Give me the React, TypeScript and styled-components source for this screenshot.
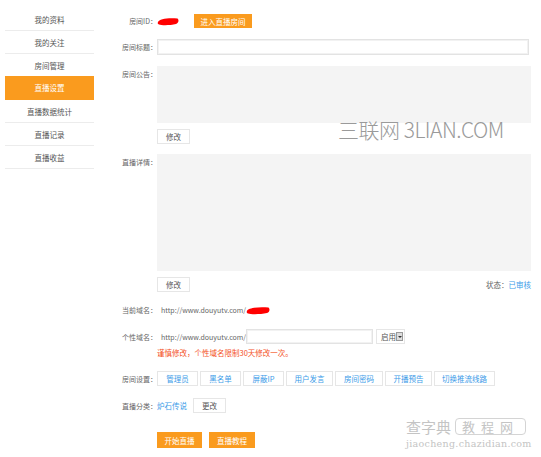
import React from "react";
import styled, { createGlobalStyle } from "styled-components";

const GlobalStyle = createGlobalStyle`
  html, body {
    margin: 0;
    padding: 0;
    background: #fff;
  }
  body {
    font-family: "Noto Sans CJK SC", "Noto Sans", sans-serif;
    font-size: 7.5px;
    color: #555;
  }
`;

const ORANGE = "#fa9b1e";

const Page = styled.div`
  position: relative;
  width: 541px;
  height: 457px;
  display: flex;
  align-items: flex-start;
  overflow: hidden;
`;

const Sidebar = styled.ul`
  list-style: none;
  margin: 8px 0 0 5px;
  padding: 0;
  width: 89px;
  flex-shrink: 0;
`;

const NavItem = styled.li<{ $active?: boolean }>`
  display: flex;
  align-items: center;
  justify-content: center;
  box-sizing: border-box;
  border-bottom: 1px solid ${({ $active }) => ($active ? ORANGE : "#ececec")};
  background: ${({ $active }) => ($active ? ORANGE : "transparent")};
  color: ${({ $active }) => ($active ? "#fff" : "#555")};
  margin-top: ${({ $active }) => ($active ? "-1px" : "0")};
  height: ${({ $active }) => ($active ? "24px" : "23px")};
`;

const Main = styled.div`
  margin-left: 11px;
  width: 426px;
  display: flex;
  flex-direction: column;
`;

const Row = styled.div<{ $mt: number; $top?: boolean }>`
  display: flex;
  align-items: ${({ $top }) => ($top ? "flex-start" : "center")};
  margin-top: ${({ $mt }) => $mt}px;
`;

const Label = styled.span<{ $pt?: number }>`
  width: 52px;
  flex-shrink: 0;
  text-align: right;
  color: #666;
  font-size: 7px;
  line-height: 14px;
  padding-top: ${({ $pt }) => $pt ?? 0}px;
  white-space: nowrap;
`;

const Indent = styled.div`
  margin-left: 52px;
  display: flex;
  align-items: center;
  justify-content: space-between;
`;

const OrangeButton = styled.button<{ $w: number; $h: number }>`
  width: ${({ $w }) => $w}px;
  height: ${({ $h }) => $h}px;
  padding: 0;
  border: none;
  background: ${ORANGE};
  color: #fff;
  font-family: inherit;
  font-size: 7.5px;
  cursor: pointer;
`;

const PlainButton = styled.button<{ $w: number; $blue?: boolean }>`
  width: ${({ $w }) => $w}px;
  height: 15px;
  padding: 0;
  border: 1px solid #e6e6e6;
  background: #fff;
  color: ${({ $blue }) => ($blue ? "#3b9be8" : "#555")};
  font-family: inherit;
  font-size: 7.5px;
  box-sizing: border-box;
`;

const TextInput = styled.div<{ $w: number; $h: number }>`
  width: ${({ $w }) => $w}px;
  height: ${({ $h }) => $h}px;
  box-sizing: border-box;
  border: 1px solid #e3e3e3;
  box-shadow: inset 0 0 0 1px #f2f2f2;
  background: #fff;
`;

const TextArea = styled.div<{ $h: number }>`
  width: 374px;
  height: ${({ $h }) => $h}px;
  background: #f4f4f4;
`;

const Url = styled.span`
  color: #666;
  font-size: 7px;
  margin-left: 4px;
  white-space: nowrap;
`;

const Status = styled.span`
  color: #666;
`;

const Blue = styled.span`
  color: #3b9be8;
`;

const Warning = styled.div`
  margin: 5px 0 0 52px;
  color: #f4511e;
  line-height: 8px;
`;

const Select = styled.div`
  margin-left: 3px;
  width: 29px;
  height: 15px;
  box-sizing: border-box;
  border: 1px solid #e6e6e6;
  display: flex;
  align-items: center;
  justify-content: space-between;
  padding: 0 1px 0 4px;
  color: #555;
`;

const Arrow = styled.span`
  width: 7px;
  height: 9px;
  background: #ddd;
  border: 1px solid #999;
  box-sizing: border-box;
  display: flex;
  align-items: center;
  justify-content: center;
  &::after {
    content: "";
    border-left: 2px solid transparent;
    border-right: 2px solid transparent;
    border-top: 2px solid #333;
  }
`;

const ButtonGroup = styled.div`
  display: flex;
  gap: 2px;
`;

const Scribble = styled.svg`
  display: block;
  flex-shrink: 0;
`;

const Watermark = styled.div`
  position: absolute;
  left: 338px;
  top: 114px;
  font-family: "Noto Sans CJK SC", "Noto Sans", sans-serif;
  font-weight: 300;
  font-size: 21px;
  color: #9a9a9a;
  letter-spacing: -0.5px;
  white-space: nowrap;
`;

const Stamp = styled.div`
  position: absolute;
  left: 406px;
  top: 417px;
  display: flex;
  flex-direction: column;
  align-items: flex-start;
  gap: 2px;
  color: #c4c4c4;
  font-family: "Noto Sans CJK SC", sans-serif;
`;

const StampTop = styled.div`
  display: flex;
  align-items: center;
  gap: 4px;
  height: 19px;
  font-size: 15px;
  line-height: 17px;
`;

const StampBox = styled.span`
  border: 1px solid #d4d4d4;
  border-radius: 4px;
  padding: 0 6px;
  letter-spacing: 6px;
  font-size: 13px;
  line-height: 15px;
`;

const StampUrl = styled.div`
  font-family: "DejaVu Serif", serif;
  font-size: 9.5px;
  line-height: 11px;
  letter-spacing: 0.3px;
`;

const RedMark = ({ w }: { w: number }) => (
  <Scribble width={w} height={9} viewBox={`0 0 ${w} 9`}>
    <path
      d={`M1 5 C 2 2, ${w * 0.5} 0.5, ${w - 1.5} 1.5 C ${w} 2.5, ${w} 6, ${w - 3} 7 C ${w * 0.6} 8.5, ${w * 0.2} 8.5, 2 7.5 C 0.5 7, 0.5 6, 1 5 Z`}
      fill="#f00"
    />
  </Scribble>
);

const navItems = [
  "我的资料",
  "我的关注",
  "房间管理",
  "直播设置",
  "直播数据统计",
  "直播记录",
  "直播收益",
];

const roomButtons = [
  { label: "管理员", w: 41 },
  { label: "黑名单", w: 41 },
  { label: "屏蔽IP", w: 41 },
  { label: "用户发言", w: 47 },
  { label: "房间密码", w: 48 },
  { label: "开播预告", w: 47 },
  { label: "切换推流线路", w: 61 },
];

export default function App() {
  return (
    <Page>
      <GlobalStyle />
      <Sidebar>
        {navItems.map((item) => (
          <NavItem key={item} $active={item === "直播设置"}>
            {item}
          </NavItem>
        ))}
      </Sidebar>
      <Main>
        <Row $mt={14}>
          <Label>房间ID：</Label>
          <RedMark w={22} />
          <OrangeButton $w={58} $h={14} style={{ marginLeft: 15 }}>
            进入直播房间
          </OrangeButton>
        </Row>
        <Row $mt={11}>
          <Label>房间标题：</Label>
          <TextInput $w={372} $h={16} />
        </Row>
        <Row $mt={11} $top>
          <Label $pt={1}>房间公告：</Label>
          <TextArea $h={57} />
        </Row>
        <Indent style={{ marginTop: 6 }}>
          <PlainButton $w={33}>修改</PlainButton>
        </Indent>
        <Row $mt={10} $top>
          <Label $pt={1}>直播详情：</Label>
          <TextArea $h={117} />
        </Row>
        <Indent style={{ marginTop: 6 }}>
          <PlainButton $w={33}>修改</PlainButton>
          <Status>
            状态：<Blue>已审核</Blue>
          </Status>
        </Indent>
        <Row $mt={11}>
          <Label>当前域名：</Label>
          <Url>http://www.douyutv.com/</Url>
          <RedMark w={24} />
        </Row>
        <Row $mt={12}>
          <Label>个性域名：</Label>
          <Url>http://www.douyutv.com/</Url>
          <TextInput $w={127} $h={15} />
          <Select>
            启用
            <Arrow />
          </Select>
        </Row>
        <Warning>谨慎修改，个性域名限制30天修改一次。</Warning>
        <Row $mt={14}>
          <Label>房间设置：</Label>
          <ButtonGroup>
            {roomButtons.map((b) => (
              <PlainButton key={b.label} $w={b.w} $blue>
                {b.label}
              </PlainButton>
            ))}
          </ButtonGroup>
        </Row>
        <Row $mt={12}>
          <Label>直播分类：</Label>
          <Blue>炉石传说</Blue>
          <PlainButton $w={33} style={{ marginLeft: 6 }}>
            更改
          </PlainButton>
        </Row>
        <Indent style={{ marginTop: 19, justifyContent: "flex-start", gap: 7 }}>
          <OrangeButton $w={45} $h={16}>开始直播</OrangeButton>
          <OrangeButton $w={46} $h={16}>直播教程</OrangeButton>
        </Indent>
      </Main>
      <Watermark>三联网 3LIAN.COM</Watermark>
      <Stamp>
        <StampTop>
          查字典
          <StampBox>教程网</StampBox>
        </StampTop>
        <StampUrl>jiaocheng.chazidian.com</StampUrl>
      </Stamp>
    </Page>
  );
}
